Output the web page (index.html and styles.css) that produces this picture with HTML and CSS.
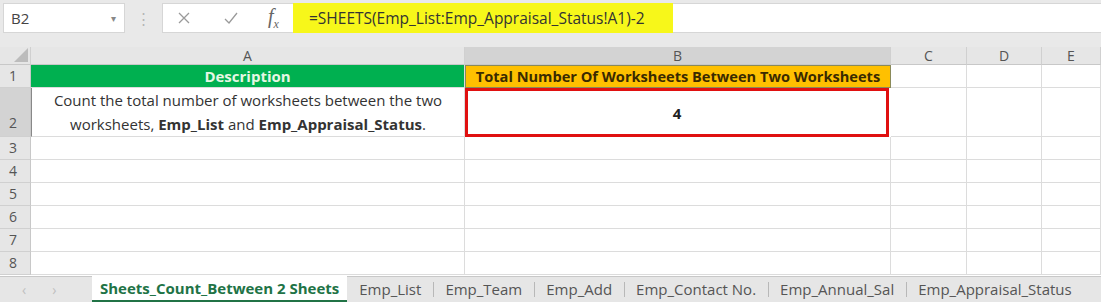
FILE: index.html
```html
<!DOCTYPE html>
<html lang="en">
<head>
    <meta charset="UTF-8">
    <title>Sheets count</title>
    <link rel="stylesheet" href="styles.css">
</head>
<body>

    <!-- Formula bar -->
    <div class="formula-bar">
        <div class="name-box">
            <span>B2</span>
            <span class="drop">&#9662;</span>
        </div>
        <div class="dots">&#8942;</div>
        <div class="fx-area">
            <div class="fx-icons">
                <svg width="16" height="16" viewBox="0 0 16 16"><path d="M3 3 L13 13 M13 3 L3 13" stroke="#9a9a9a" stroke-width="1.3" fill="none"/></svg>
                <svg width="16" height="16" viewBox="0 0 16 16"><path d="M2 9 L6 13 L14 3" stroke="#9a9a9a" stroke-width="1.3" fill="none"/></svg>
                <span class="fx"><i>f</i><sub>x</sub></span>
            </div>
            <div class="formula">=SHEETS(Emp_List:Emp_Appraisal_Status!A1)-2</div>
        </div>
    </div>

    <!-- Sheet grid -->
    <div class="grid">
        <div class="corner"><svg width="14" height="14" viewBox="0 0 14 14"><path d="M14 0 L14 14 L0 14 Z" fill="#bcbcbc"/></svg></div>
        <div class="col-head">A</div>
        <div class="col-head sel">B</div>
        <div class="col-head">C</div>
        <div class="col-head">D</div>
        <div class="col-head">E</div>

        <div class="row-head">1</div>
        <div class="cell green">Description</div>
        <div class="cell orange">Total Number Of Worksheets Between Two Worksheets</div>
        <div class="cell"></div><div class="cell"></div><div class="cell"></div>

        <div class="row-head sel tall">2</div>
        <div class="cell desc">Count the total number of worksheets between the two worksheets, <b>Emp_List</b> and <b>Emp_Appraisal_Status</b>.</div>
        <div class="cell result"><b>4</b></div>
        <div class="cell"></div><div class="cell"></div><div class="cell"></div>

        <div class="row-head">3</div><div class="cell"></div><div class="cell"></div><div class="cell"></div><div class="cell"></div><div class="cell"></div>
        <div class="row-head">4</div><div class="cell"></div><div class="cell"></div><div class="cell"></div><div class="cell"></div><div class="cell"></div>
        <div class="row-head">5</div><div class="cell"></div><div class="cell"></div><div class="cell"></div><div class="cell"></div><div class="cell"></div>
        <div class="row-head">6</div><div class="cell"></div><div class="cell"></div><div class="cell"></div><div class="cell"></div><div class="cell"></div>
        <div class="row-head">7</div><div class="cell"></div><div class="cell"></div><div class="cell"></div><div class="cell"></div><div class="cell"></div>
        <div class="row-head">8</div><div class="cell"></div><div class="cell"></div><div class="cell"></div><div class="cell"></div><div class="cell"></div>
    </div>

    <!-- Sheet tabs -->
    <div class="tabs">
        <div class="nav"><span>&#8249;</span><span>&#8250;</span></div>
        <div class="tab active">Sheets_Count_Between 2 Sheets</div>
        <div class="tab">Emp_List</div>
        <div class="tab">Emp_Team</div>
        <div class="tab">Emp_Add</div>
        <div class="tab">Emp_Contact No.</div>
        <div class="tab">Emp_Annual_Sal</div>
        <div class="tab">Emp_Appraisal_Status</div>
    </div>

</body>
</html>
```

FILE: styles.css
```css
* {
    margin: 0;
    padding: 0;
    box-sizing: border-box;
}

body {
    width: 1101px;
    height: 308px;
    overflow: hidden;
    background: #ffffff;
    font-family: "Open Sans", "Liberation Sans", sans-serif;
    font-size: 15px;
    color: #333;
}

/* Formula bar */
.formula-bar {
    display: flex;
    align-items: stretch;
    background: #e9e9e9;
    height: 47px;
    padding: 3px 0 14px 3px;
}

.name-box {
    width: 122px;
    background: #fff;
    border: 1px solid #d6d6d6;
    display: flex;
    align-items: center;
    justify-content: space-between;
    padding: 0 8px 0 7px;
    font-size: 15px;
    color: #444;
}

.name-box .drop {
    font-size: 10px;
    color: #888;
}

.dots {
    width: 37px;
    text-align: center;
    color: #b5b5b5;
    font-size: 15px;
    line-height: 30px;
}

.fx-area {
    flex: 1;
    display: flex;
    background: #fff;
    border: 1px solid #d6d6d6;
    border-right: none;
}

.fx-icons {
    width: 130px;
    display: flex;
    align-items: center;
    gap: 31px;
    padding-left: 13px;
}

.fx {
    font-family: "Liberation Serif", serif;
    font-size: 20px;
    color: #666;
    margin-left: -2px;
}

.fx sub {
    font-size: 12px;
    font-style: italic;
}

.formula {
    background: #f7f71a;
    width: 380px;
    margin: -1px 0;
    padding-left: 16px;
    display: flex;
    align-items: center;
    font-size: 15.5px;
    color: #333;
}

/* Grid */
.grid {
    display: grid;
    grid-template-columns: 31px 434px 426px 76px 75px 59px;
    grid-template-rows: 18px 23px 49px repeat(6, 23px);
    background: #fff;
}

.corner {
    background: #e6e6e6;
    border-right: 1px solid #d0d0d0;
    border-bottom: 1px solid #c8c8c8;
    display: flex;
    align-items: flex-end;
    justify-content: flex-end;
    padding: 0 2px 2px 0;
}

.col-head {
    background: #e6e6e6;
    border-right: 1px solid #d0d0d0;
    border-bottom: 1px solid #c8c8c8;
    text-align: center;
    line-height: 18px;
    font-size: 14px;
    color: #555;
}

.col-head.sel, .row-head.sel {
    background: #d3d3d3;
}

.row-head {
    background: #e6e6e6;
    border-bottom: 1px solid #d0d0d0;
    border-right: 1px solid #c8c8c8;
    color: #555;
    font-size: 14px;
    padding-left: 9px;
    line-height: 22px;
}

.row-head.tall {
    display: flex;
    align-items: flex-end;
    padding-bottom: 2px;
}

.cell {
    border-right: 1px solid #dcdcdc;
    border-bottom: 1px solid #dcdcdc;
}

.green {
    background: #00b050;
    color: #e6f7e4;
    font-weight: bold;
    text-align: center;
    line-height: 22px;
}

.orange {
    background: #ffc000;
    color: #3a2a00;
    font-weight: bold;
    font-size: 14.6px;
    text-align: center;
    line-height: 21px;
    border: 1px solid #8a8a5a;
    white-space: nowrap;
    overflow: hidden;
}

.desc {
    text-align: center;
    line-height: 24px;
    padding: 0 10px;
    border-left: 1px solid #888;
}

.result {
    border: 3px solid #e01010;
    display: flex;
    align-items: center;
    justify-content: center;
    margin-right: 2px;
    color: #222;
}

/* Sheet tabs */
.tabs {
    display: flex;
    align-items: stretch;
    height: 26px;
    margin-top: 1px;
    background: #e6e6e6;
    border-top: 1px solid #c8c8c8;
    color: #555;
    font-size: 15px;
}

.nav {
    width: 92px;
    display: flex;
    gap: 26px;
    padding-left: 22px;
    align-items: center;
    color: #c0c0c0;
    font-size: 14px;
}

.tab {
    padding: 0 12px;
    line-height: 24px;
    white-space: nowrap;
    position: relative;
}

.tab + .tab::before {
    content: "";
    position: absolute;
    left: 0;
    top: 5px;
    height: 15px;
    border-left: 1px solid #b8b8b8;
}

.tab.active {
    background: #fff;
    color: #217346;
    font-weight: bold;
    border-bottom: 2px solid #217346;
    padding: 0 8px;
    margin-top: -1px;
}

.tab.active + .tab::before {
    display: none;
}
```
